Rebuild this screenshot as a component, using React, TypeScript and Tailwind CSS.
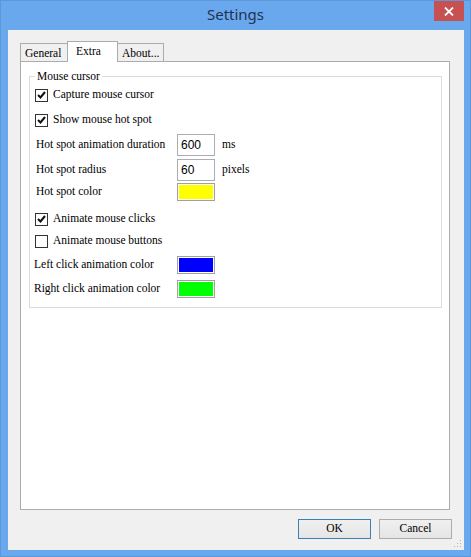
import React from "react";

const serif = { fontFamily: '"Liberation Serif", "Times New Roman", serif' };

const Check = ({ checked, label }: { checked: boolean; label: string }) => {
  return (
    <div className="flex h-[14px] items-center pl-[5px]">
      <div className="flex h-[13px] w-[13px] shrink-0 items-center justify-center border border-[#333333] bg-white">
        {checked && (
          <svg width="9" height="8" viewBox="0 0 9 8">
            <path d="M1 4 L3.5 6.5 L8 1" fill="none" stroke="#111" strokeWidth="2" />
          </svg>
        )}
      </div>
      <span className="ml-[5px] whitespace-nowrap text-[11.5px] leading-none text-black">{label}</span>
    </div>
  );
};

const Field = ({ label, value, unit, mt }: { label: string; value: string; unit: string; mt: string }) => {
  return (
    <div className={`flex h-[22px] items-center ${mt}`}>
      <span className="w-[147px] shrink-0 whitespace-nowrap pl-[6px] text-[11.5px] leading-none">{label}</span>
      <div
        className="flex h-[22px] w-[38px] shrink-0 items-center border border-[#abadb3] bg-white pl-[3px] text-[12px] text-black"
        style={{ fontFamily: '"Liberation Sans", Arial, sans-serif' }}
      >
        {value}
      </div>
      <span className="ml-[7px] whitespace-nowrap text-[11.5px] leading-none">{unit}</span>
    </div>
  );
};

const Swatch = ({ label, color, indent }: { label: string; color: string; indent: string }) => {
  return (
    <div className="flex h-[18px] items-center">
      <span className={`${indent} shrink-0 whitespace-nowrap text-[11.5px] leading-none`}>{label}</span>
      <div className="h-[18px] w-[38px] shrink-0 border border-[#a0a0a0] bg-white p-[1px]">
        <div className={`h-full w-full ${color}`} />
      </div>
    </div>
  );
};

export default function App() {
  return (
    <div className="relative flex h-[557px] w-[471px] flex-col border border-[#5b97da] bg-[#6aa8ed]">
      {/* title bar */}
      <div className="relative flex h-[29px] shrink-0 items-center justify-center">
        <span
          className="-mt-[3px] text-[15px] text-[#1f3350]"
          style={{ fontFamily: '"Noto Sans", "Open Sans", sans-serif' }}
        >
          Settings
        </span>
        <div className="absolute right-[6px] top-0 flex h-[20px] w-[30px] items-center justify-center bg-[#c75050]">
          <svg width="10" height="9" viewBox="0 0 10 9">
            <path d="M1 0.5 L9 8.5 M9 0.5 L1 8.5" stroke="#fff" strokeWidth="1.8" />
          </svg>
        </div>
      </div>

      {/* client */}
      <div className="relative ml-[7px] mr-[6px] flex h-[520px] flex-col bg-[#f0f0f0]" style={serif}>
        <div className="ml-[12px] mt-[11px] flex h-[21px] items-end">
          <div className="flex h-[19px] w-[47px] items-start border border-b-0 border-r-0 border-[#acacac] bg-[#f0f0f0] pl-[4px] pt-[4px] text-[11.5px] leading-none">
            General
          </div>
          <div className="relative z-10 flex h-[21px] w-[51px] items-start border border-b-0 border-[#acacac] bg-white pl-[8px] pt-[4px] text-[11.5px] leading-none">
            Extra
          </div>
          <div className="flex h-[19px] w-[46px] items-start border border-b-0 border-l-0 border-[#acacac] bg-[#f0f0f0] pl-[4px] pt-[4px] text-[11.5px] leading-none">
            About...
          </div>
        </div>

        {/* tab panel */}
        <div className="-mt-[1px] ml-[12px] h-[449px] w-[430px] border border-[#acacac] bg-white pt-[14px]">
          <div className="relative ml-[8px] w-[413px] border border-[#dcdcdc] pb-[9px] pt-[11px] text-black">
            <span className="absolute -top-[8px] left-[5px] bg-white px-[2px] text-[11.5px] leading-[14px]">
              Mouse cursor
            </span>
            <Check checked label="Capture mouse cursor" />
            <div className="mt-[11px]">
              <Check checked label="Show mouse hot spot" />
            </div>
            <Field label="Hot spot animation duration" value="600" unit="ms" mt="mt-[7px]" />
            <Field label="Hot spot radius" value="60" unit="pixels" mt="mt-[3px]" />
            <div className="mt-[2px]">
              <Swatch label="Hot spot color" color="bg-[#ffff00]" indent="w-[147px] pl-[6px]" />
            </div>
            <div className="mt-[11px]">
              <Check checked label="Animate mouse clicks" />
            </div>
            <div className="mt-[8px]">
              <Check checked={false} label="Animate mouse buttons" />
            </div>
            <div className="mt-[8px]">
              <Swatch label="Left click animation color" color="bg-[#0000ff]" indent="w-[147px] pl-[4px]" />
            </div>
            <div className="mt-[6px]">
              <Swatch label="Right click animation color" color="bg-[#00ff00]" indent="w-[147px] pl-[4px]" />
            </div>
          </div>
        </div>

        {/* buttons */}
        <div className="mr-[12px] mt-[9px] flex justify-end gap-[8px]">
          <button className="flex h-[20px] w-[73px] items-center justify-center border border-[#3c7fb1] bg-gradient-to-b from-[#f0f0f0] to-[#e5e5e5] text-[11.5px] leading-none text-black">
            OK
          </button>
          <button className="flex h-[20px] w-[73px] items-center justify-center border border-[#acacac] bg-gradient-to-b from-[#f0f0f0] to-[#e5e5e5] text-[11.5px] leading-none text-black">
            Cancel
          </button>
        </div>

        {/* size grip */}
        <svg className="absolute bottom-[2px] right-[2px]" width="10" height="10" viewBox="0 0 10 10">
          <rect x="8" y="2" width="1" height="1" fill="#b8b8b8" />
          <rect x="5" y="5" width="1" height="1" fill="#b8b8b8" />
          <rect x="8" y="5" width="1" height="1" fill="#b8b8b8" />
          <rect x="2" y="8" width="1" height="1" fill="#b8b8b8" />
          <rect x="5" y="8" width="1" height="1" fill="#b8b8b8" />
          <rect x="8" y="8" width="1" height="1" fill="#b8b8b8" />
        </svg>
      </div>
    </div>
  );
}
